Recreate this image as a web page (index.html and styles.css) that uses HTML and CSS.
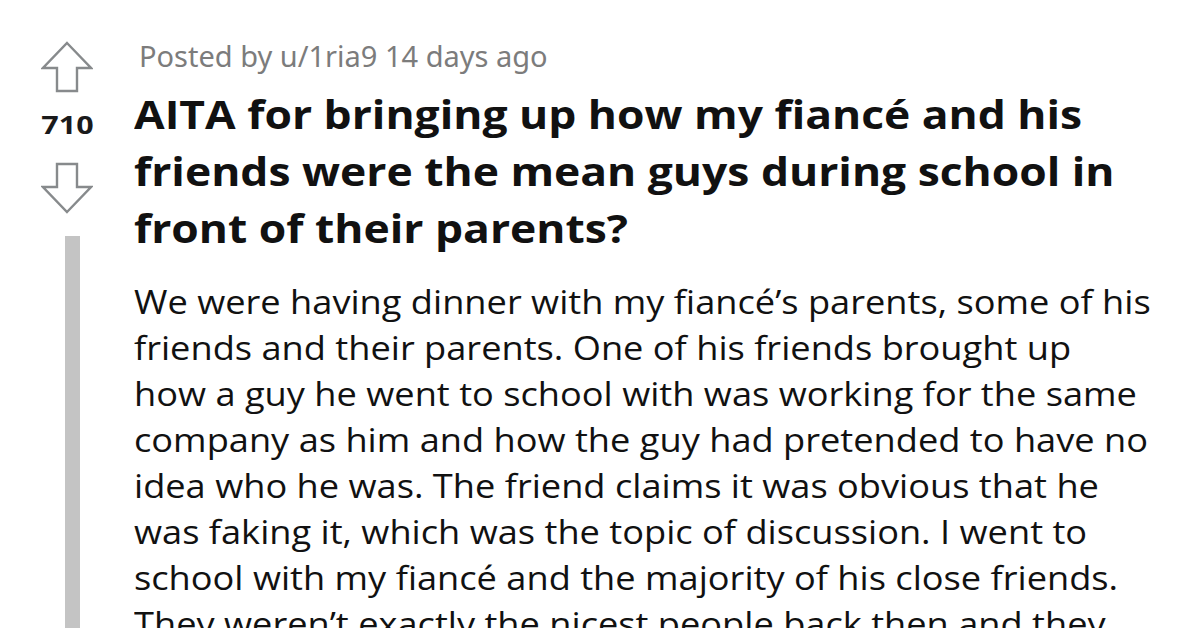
FILE: index.html
```html
<!DOCTYPE html>
<html>
<head>
<meta charset="utf-8">
<link rel="stylesheet" href="styles.css">
</head>
<body>
<div class="post">
  <div class="votes">
    <svg class="arrow up" width="52" height="52" viewBox="0 0 52 52"><path d="M26 2 L50 27 H36 V50 H16 V27 H2 Z" fill="none" stroke="#878a8c" stroke-width="2.4" stroke-linejoin="miter"/></svg>
    <div class="score">710</div>
    <svg class="arrow down" width="52" height="52" viewBox="0 0 52 52"><path d="M26 50 L50 25 H36 V2 H16 V25 H2 Z" fill="none" stroke="#878a8c" stroke-width="2.4" stroke-linejoin="miter"/></svg>
    <div class="thread-line"></div>
  </div>
  <div class="content">
    <div class="meta">Posted by u/1ria9 14 days ago</div>
    <h1 class="title">AITA for bringing up how my fiancé and his<br>friends were the mean guys during school in<br>front of their parents?</h1>
    <p class="body">We were having dinner with my fiancé’s parents, some of his<br>friends and their parents. One of his friends brought up<br>how a guy he went to school with was working for the same<br>company as him and how the guy had pretended to have no<br>idea who he was. The friend claims it was obvious that he<br>was faking it, which was the topic of discussion. I went to<br>school with my fiancé and the majority of his close friends.<br>They weren’t exactly the nicest people back then and they</p>
  </div>
</div>
</body>
</html>
```

FILE: styles.css
```css
html, body {
  margin: 0;
  padding: 0;
  background: #ffffff;
  overflow: hidden;
}

.post {
  display: flex;
  width: 1200px;
  height: 628px;
  overflow: hidden;
}

.votes {
  width: 134px;
  flex: none;
  display: flex;
  flex-direction: column;
  align-items: center;
  padding-top: 41px;
  box-sizing: border-box;
}

.arrow {
  display: block;
}

.arrow.down {
  margin-top: 5px;
}

.score {
  font-family: "Open Sans", "Noto Sans", sans-serif;
  font-weight: 700;
  font-size: 25px;
  line-height: 30px;
  color: #1a1a1b;
  margin-top: 16px;
  margin-bottom: 18px;
  transform: scaleX(1.22);
}

.thread-line {
  width: 15px;
  margin-top: 22px;
  margin-left: 11px;
  flex: 1;
  background: #c4c4c4;
}

.content {
  flex: 1;
  min-width: 0;
  white-space: nowrap;
}

.meta {
  font-family: "Noto Sans", "Open Sans", sans-serif;
  font-size: 29px;
  line-height: 36px;
  color: #7c7c7c;
  margin-top: 38px;
  padding-left: 5px;
}

.title {
  width: max-content;
  font-family: "Open Sans", "Noto Sans", sans-serif;
  font-weight: 700;
  font-size: 40px;
  line-height: 57px;
  color: #111111;
  margin: 11px 0 0 0;
  transform: scaleX(1.11);
  transform-origin: left top;
}

.body {
  width: max-content;
  font-family: "Open Sans", "Noto Sans", sans-serif;
  font-weight: 400;
  font-size: 33px;
  line-height: 46px;
  color: #111111;
  margin: 23px 0 0 0;
  transform: scaleX(1.097);
  transform-origin: left top;
}
```
